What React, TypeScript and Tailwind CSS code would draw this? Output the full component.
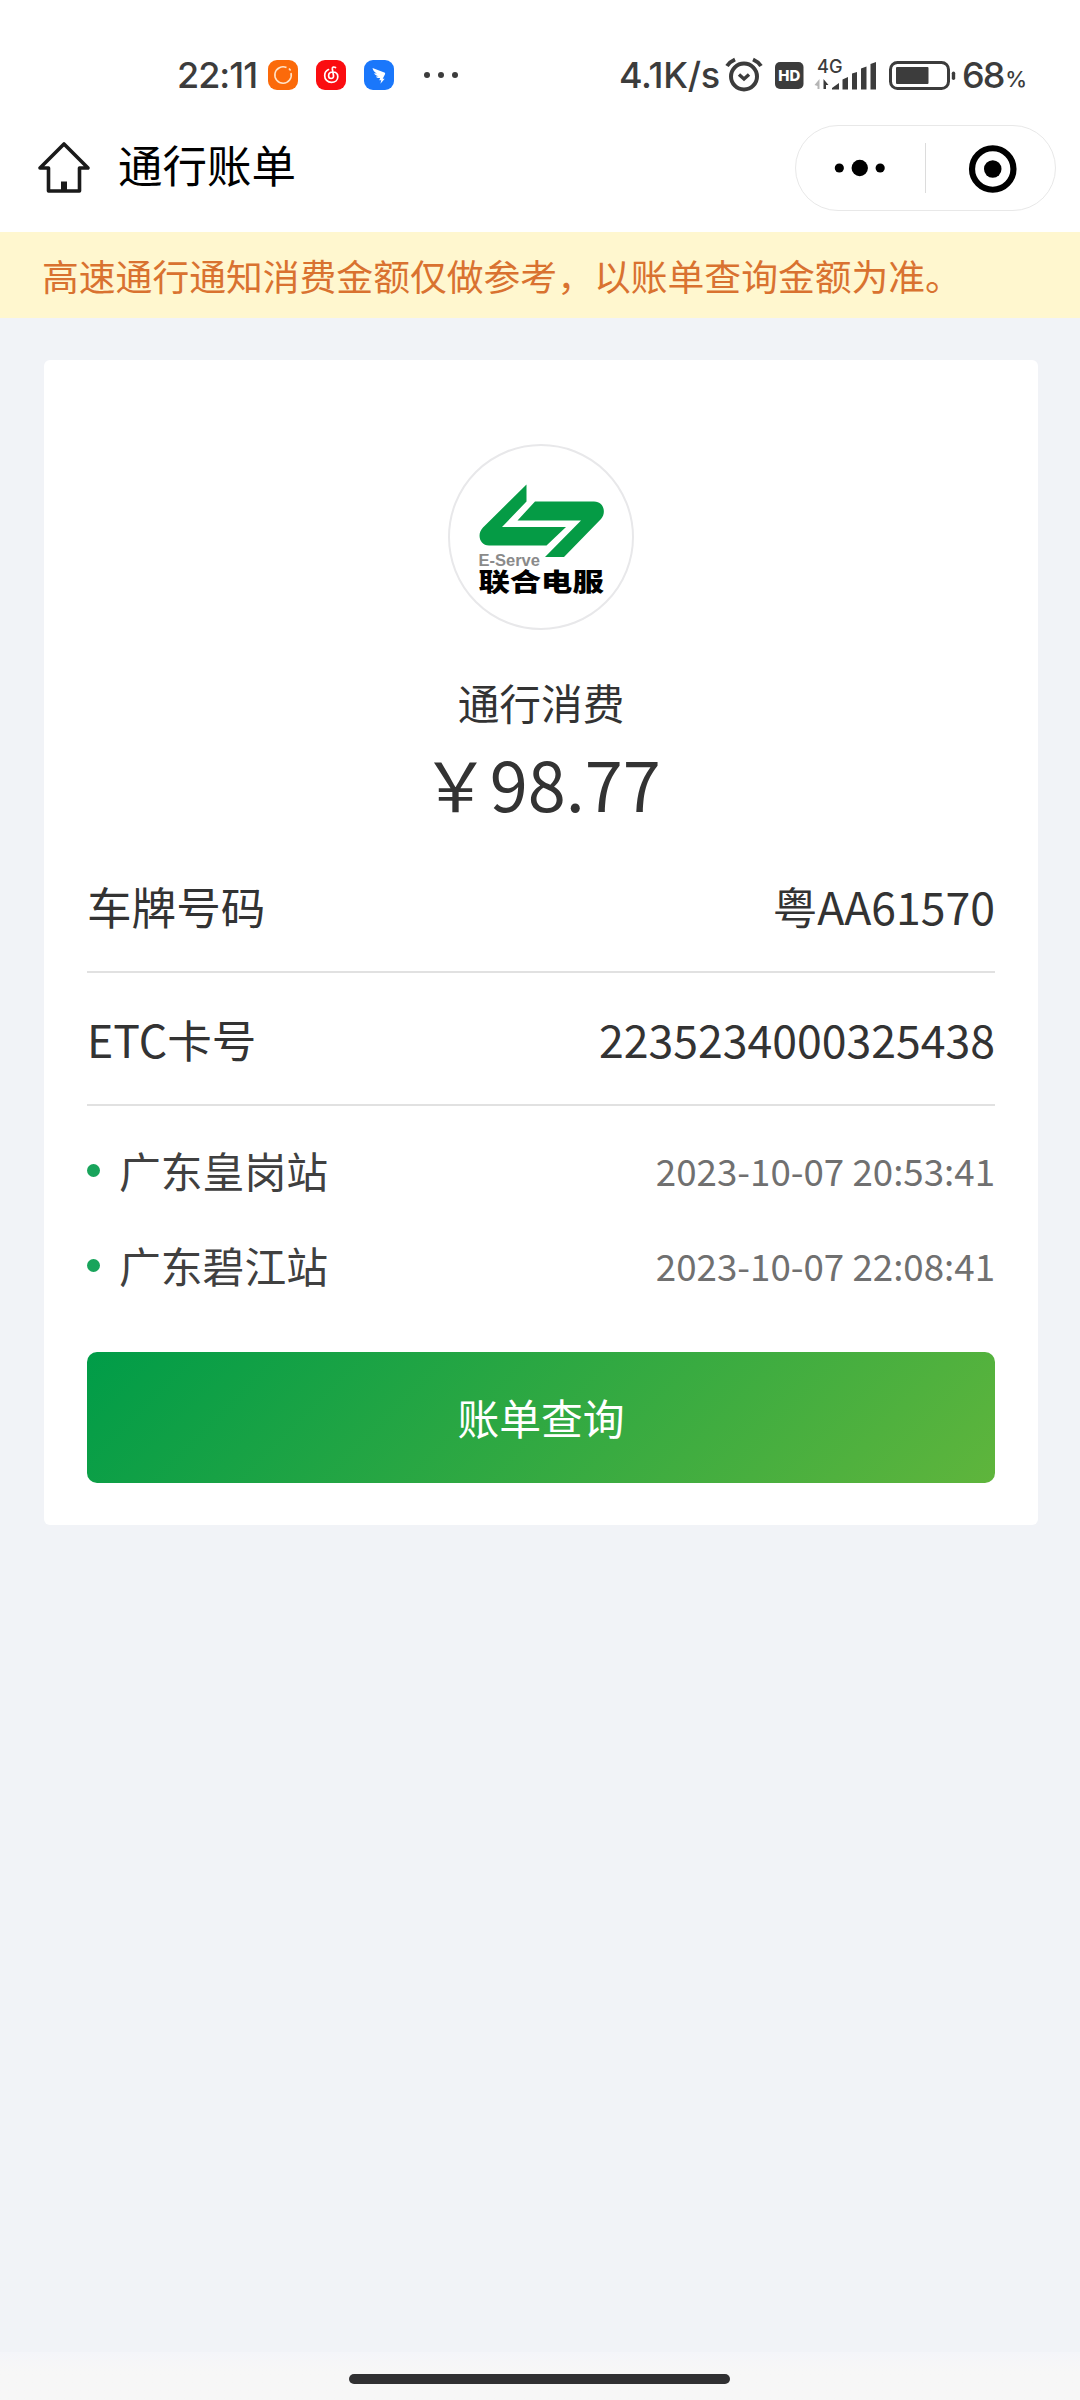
const rows = [
  { label: "车牌号码", value: "粤AA61570" },
  { label: "ETC卡号", value: "2235234000325438" },
];

const stations = [
  { name: "广东皇岗站", time: "2023-10-07 20:53:41" },
  { name: "广东碧江站", time: "2023-10-07 22:08:41" },
];

function AppIcons() {
  return (
    <svg width="192" height="32" viewBox="0 0 192 32" className="ml-[9px]">
      {/* orange ring */}
      <rect x="1" y="1" width="30" height="30" rx="9" fill="#fb6a0a" />
      <path d="M19.5 8.6A8.2 8.2 0 1 0 24 14" fill="none" stroke="#ffe3c8" strokeWidth="1.6" />
      <path d="M22 9.6l1.6 2" stroke="#ffe3c8" strokeWidth="1.6" />
      {/* music */}
      <rect x="49" y="1" width="30" height="30" rx="9" fill="#fb0d10" />
      <path
        d="M68.5 8.5c-1.6-1-3.4-.4-3.2 1.4l1.2 6.6c.3 2-.9 3-2.4 3-1.6 0-2.5-1.2-2.5-2.7 0-2.5 2-3.8 4.2-3.8 3.4 0 5 2 5 4.7 0 3.4-2.8 5.7-6.3 5.7-4 0-6.8-2.9-6.8-6.7 0-2.7 1.4-5 3.8-6.1"
        fill="none"
        stroke="#fff"
        strokeWidth="1.7"
        strokeLinecap="round"
      />
      {/* wing */}
      <rect x="97" y="1" width="30" height="30" rx="9" fill="#1a77fb" />
      <path
        d="M105.5 9l11.8 4.6c1 .4 1 1.2.6 2l-2.2 4.2h2l-4.3 5 .9-3.6h-2l.8-2.2c-2.2.2-3.5-.4-4.1-1.5l2.7-.3c-2.6-.6-4-1.5-4.6-3l2.8.2c-2.4-1.2-3.9-2.9-4.4-5.4z"
        fill="#fff"
      />
      <circle cx="160" cy="16" r="3" fill="#3c3c3c" />
      <circle cx="174" cy="16" r="3" fill="#3c3c3c" />
      <circle cx="188" cy="16" r="3" fill="#3c3c3c" />
    </svg>
  );
}

function StatusIcons() {
  return (
    <svg width="236" height="40" viewBox="722 54 236 40" fill="none" className="ml-0.5">
      {/* alarm */}
      <circle cx="744" cy="75.5" r="13" stroke="#3c3c3c" strokeWidth="4" />
      <path d="M739 73.5l5 4.5 5-4.5" stroke="#3c3c3c" strokeWidth="3.4" />
      <path d="M727 65c2-3 4.500-5 8-6.5M761 65c-2-3-4.500-5-8-6.5" stroke="#3c3c3c" strokeWidth="4" />
      {/* HD */}
      <rect x="775" y="61" width="28.5" height="27" rx="5" fill="#3c3c3c" />
      <text x="789.3" y="80" textAnchor="middle" fill="#fff" fontSize="15" fontWeight="800" fontFamily="Inter, sans-serif" textLength="22" lengthAdjust="spacingAndGlyphs">
        HD
      </text>
      {/* signal */}
      <text x="817" y="71.5" fill="#3c3c3c" fontSize="18.5" fontWeight="500" fontFamily="Inter, sans-serif" textLength="25.5" lengthAdjust="spacingAndGlyphs">
        4G
      </text>
      <path d="M819.5 78v10h-2v-3l-3-1z" fill="#b5b5b5" />
      <path d="M823.5 88v-10l5 6h-2.5v4z" fill="#3c3c3c" />
      <path
        d="M832 88.5v-1.5l7-5v6.5zM842.5 88.5V78.5l5.5-2.5v12.5zM852 88.5V72.5l5-1.5v17.5zM861 88.5V67.5l5.5-2v23zM870.5 88.5V63l5.5-2v27.5z"
        fill="#3c3c3c"
      />
      {/* battery */}
      <rect x="890.5" y="61.5" width="58" height="26" rx="7" stroke="#3c3c3c" strokeWidth="3" />
      <rect x="896" y="66" width="32.5" height="17" rx="1" fill="#3c3c3c" />
      <rect x="951.8" y="70.5" width="3.4" height="8.5" rx="1.7" fill="#3c3c3c" />
    </svg>
  );
}

function StatusBar() {
  return (
    <div className="flex h-[110px] items-center pt-10 pl-[177px] font-[Inter,sans-serif] text-[36px] leading-none font-medium text-[#3c3c3c]">
      <span className="w-[81px] tracking-[-1px] whitespace-nowrap">22:11</span>
      <AppIcons />
      <span className="ml-[160px] w-[101px] tracking-[-0.3px] whitespace-nowrap">4.1K/s</span>
      <StatusIcons />
      <span className="ml-1 tracking-[-2px]">68</span>
      <span className="ml-0.5 pt-2 text-[22px]">%</span>
    </div>
  );
}

function NavBar() {
  return (
    <header className="flex h-[122px] items-start pt-[15px] pr-6 pl-[37px]">
      <svg width="54" height="54" viewBox="0 0 54 54" fill="none" stroke="#1a1a1a" strokeWidth="3.6" strokeLinejoin="round" className="mt-[15px]">
        <path d="M27 4L51 28H42.5v23h-31V28H3z" />
        <path d="M27 41.5v9" strokeWidth="6" />
      </svg>
      <h1 className="mt-[7px] ml-[27px] text-[44.5px] leading-[64px] text-black">通行账单</h1>
      <div className="ml-auto flex h-[86px] w-[261px] items-center rounded-full border border-[#e8e8e8]">
        <svg width="129" height="50" viewBox="0 0 129 50">
          <circle cx="43.5" cy="25" r="4.6" />
          <circle cx="64" cy="25" r="8.2" />
          <circle cx="84.5" cy="25" r="4.6" />
        </svg>
        <div className="h-[50px] w-px bg-[#dcdcdc]" />
        <svg width="130" height="50" viewBox="0 0 130 50">
          <circle cx="67" cy="26" r="20.8" fill="none" stroke="#000" strokeWidth="6.2" />
          <circle cx="67" cy="26" r="8.8" />
        </svg>
      </div>
    </header>
  );
}

function Logo() {
  return (
    <svg width="186" height="186" viewBox="448 444 186 186" className="mt-[84px]">
      <circle cx="541" cy="537" r="92" fill="#fff" stroke="#e8e8ea" strokeWidth="2" />
      <path d="M526.5 484.5V501.5L502 527H566L546.5 545.5H489C479.5 545.5 476.5 534 483 527.5Z" fill="#059b45" />
      <path d="M535 501.5H594C604 501.5 606.5 513 601 519L564 557H545L581 520.5H517.5Z" fill="#059b45" />
      <text x="478.5" y="565.5" fill="#8a8a8a" fontSize="16.5" fontWeight="700" fontFamily="Liberation Sans, sans-serif" textLength="61.5" lengthAdjust="spacingAndGlyphs">
        E-Serve
      </text>
      <text transform="translate(478.5 590.5) scale(1.01 .79)" fill="#000" fontSize="31" fontWeight="900" fontFamily="Noto Sans CJK SC, sans-serif">
        联合电服
      </text>
    </svg>
  );
}

export default function App() {
  return (
    <div className="flex h-[2400px] w-[1080px] flex-col bg-[#f1f3f7] font-['Noto_Sans_CJK_SC',sans-serif] text-[#333]">
      <div className="bg-white">
        <StatusBar />
        <NavBar />
      </div>

      <div className="flex h-[86px] items-center bg-[#fff7cf] pt-0.5 pl-[42px] text-[36.8px] whitespace-nowrap text-[#d97230]">
        高速通行通知消费金额仅做参考，以账单查询金额为准。
      </div>

      <main className="mt-[42px] mr-[42px] ml-11 flex h-[1165px] flex-col items-center rounded-md bg-white px-[43px]">
        <Logo />
        <p className="mt-[42px] text-[41.7px] leading-[60px]">通行消费</p>
        <p className="mt-px text-[68.5px] leading-[100px]">￥98.77</p>

        <div className="mt-[7px] w-full">
          {rows.map((row) => (
            <div key={row.label} className="flex h-[133px] items-center justify-between border-b-2 border-[#e1e1e1] pt-0.5 text-[44.6px] leading-none">
              <span>{row.label}</span>
              <span>{row.value}</span>
            </div>
          ))}
        </div>

        <div className="mt-[17px] w-full">
          {stations.map((s) => (
            <div key={s.name} className="flex h-[95px] items-center">
              <i className="mr-[19px] size-[13px] rounded-full bg-[#18a45b]" />
              <span className="text-[41.8px] leading-none text-[#404040]">{s.name}</span>
              <span className="ml-auto text-[36.7px] leading-none text-[#707070]">{s.time}</span>
            </div>
          ))}
        </div>

        <button className="mt-[39px] flex h-[131px] w-full items-center justify-center rounded-[10px] bg-linear-[135deg,#009c48,#5fb53c] text-[41.8px] leading-none text-white">
          账单查询
        </button>
      </main>

      <div className="mt-auto flex h-12 justify-center bg-linear-to-b from-[#f4f5f9] to-[#f7f7f7] to-40% pt-[22px]">
        <div className="mr-0.5 h-[10px] w-[381px] rounded-full bg-[#303032]" />
      </div>
    </div>
  );
}
